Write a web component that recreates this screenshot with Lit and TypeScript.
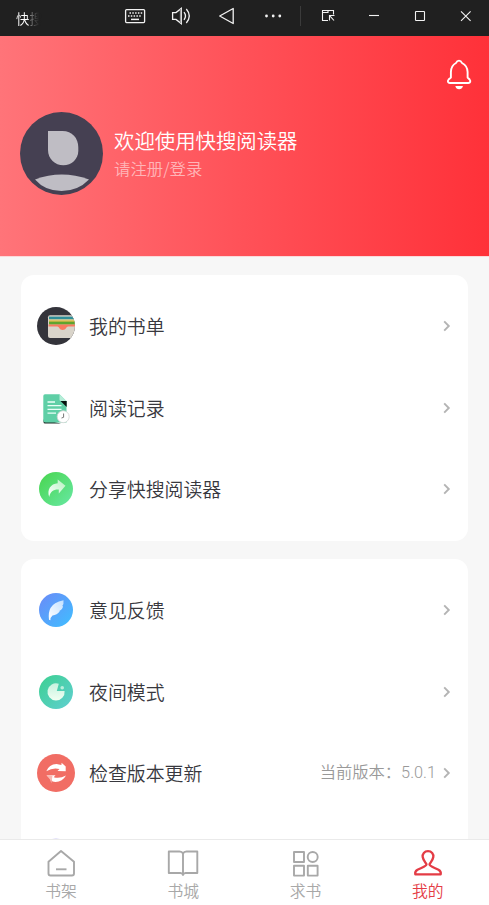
import { LitElement, html, svg, css } from "lit";
import { customElement, property } from "lit/decorators.js";

const cjk = css`"Noto Sans CJK SC", "Noto Sans", sans-serif`;
const demi = css`"Noto Sans CJK SC DemiLight", "Noto Sans CJK SC", "Noto Sans", sans-serif`;

const chevron = html`<svg width="8" height="12" viewBox="0 0 8 12" fill="none" stroke="#b4b4b4" stroke-width="1.900"><path d="M1.200 1.400 5.800 6 1.200 10.600"/></svg>`;

const icons: Record<string, unknown> = {
  list: svg`
    <defs><clipPath id="c"><circle cx="19" cy="19" r="19"/></clipPath></defs>
    <circle cx="19" cy="19" r="19" fill="#34343b"/>
    <g clip-path="url(#c)">
      <rect x="11" y="8.300" width="30" height="22.800" rx="2" fill="#d9d4ca"/>
      <rect x="12" y="9.600" width="28" height="3" fill="#2e8e98"/>
      <rect x="12" y="12.400" width="28" height="1.200" fill="#e5d28c"/>
      <rect x="12" y="13.400" width="28" height="1.500" fill="#dcb83c"/>
      <rect x="12" y="14.700" width="28" height="2.900" fill="#5fa52e"/>
      <path d="M11.500 17.400H40V19.400H31c-1.600 0-2 3.500-5.300 3.500S22 19.400 20.400 19.400H11.500z" fill="#fa7a60"/>
    </g>`,
  record: svg`
    <path d="M6.500 30.500V33q0 1.500 1.500 1.500h16z" fill="#1c2b26"/>
    <path d="M8 5.300H22.500L29.500 12.300V33.500H8.500Q6.300 33.500 6.300 31.300V7Q6.300 5.300 8 5.300z" fill="#5fcfa6"/>
    <path d="M22.500 5.300V10.500Q22.500 12 24 12H29.500z" fill="#b5edd8"/>
    <path d="M23.500 12H29.700V18z" fill="#06110d"/>
    <path d="M10.500 13H18M10.500 16.700H24.500M10.500 20.400H24.500M10.500 24.200H19" stroke="#eafff7" stroke-width="1.300" fill="none"/>
    <circle cx="26.200" cy="27.700" r="6" fill="#fff" stroke="#cfd3d2" stroke-width=".8"/>
    <path d="M26.600 24.500V28.300L24.500 29" stroke="#777" stroke-width="1" fill="none"/>`,
  share: svg`
    <defs><linearGradient id="g" x1="0" y1="0" x2="1" y2="1"><stop offset=".1" stop-color="#4bd756"/><stop offset="1" stop-color="#68e8a4"/></linearGradient>
    <linearGradient id="a" x1="0" y1="1" x2="1" y2="0"><stop stop-color="#fff"/><stop offset="1" stop-color="#b5f2c0"/></linearGradient></defs>
    <circle cx="19" cy="19" r="17" fill="url(#g)"/>
    <path d="M20.700 9.500 28.500 15.800 21.800 23.400V19.600C16.500 19.300 13.500 21.500 12.200 26.900 9.800 19.800 13.500 13.800 20.700 13.300z" fill="url(#a)"/>`,
  feedback: svg`
    <defs><linearGradient id="g" x1="0" y1="0" x2="1" y2="1"><stop offset=".1" stop-color="#678ff8"/><stop offset=".9" stop-color="#43baff"/></linearGradient>
    <linearGradient id="a" x1="1" y1="0" x2="0" y2="1"><stop stop-color="#c4e1ff"/><stop offset="1" stop-color="#fff"/></linearGradient></defs>
    <circle cx="19" cy="19" r="17" fill="url(#g)"/>
    <path d="M26.500 9.300Q16.500 11.500 13.500 17 11 21.500 12 28.800L13.400 29.200Q13.400 26.200 15.500 24.500 20 24.200 22.800 20.300L22.300 19.900Q25.700 18.300 26 15.200L25.300 14.900Q27 13 26.500 9.300z" fill="url(#a)"/>`,
  night: svg`
    <defs><linearGradient id="g" x1="0" y1="0" x2="1" y2="1"><stop offset=".1" stop-color="#40d097"/><stop offset=".9" stop-color="#5dcfcb"/></linearGradient>
    <linearGradient id="a" x1="0" y1="0" x2="0" y2="1"><stop stop-color="#c7f2df"/><stop offset="1" stop-color="#f1fff2"/></linearGradient></defs>
    <circle cx="19" cy="19" r="17" fill="url(#g)"/>
    <path d="M21.800 10.700A8.600 8.600 0 1 0 27.600 17.900L19.800 18z" fill="url(#a)"/>
    <circle cx="25.200" cy="14.800" r="1.800" fill="#bcefdc"/>`,
  update: svg`
    <circle cx="19" cy="19" r="19" fill="#f16d64"/>
    <path d="M9.300 17.200Q12 10.400 19.500 10L24.400 10.900 24.600 8.700 28.700 12.500V17.300L20.500 16.900 22.500 15Q16 13.200 9.300 17.200z" fill="#fff"/>
    <path d="M29 21.600Q25.500 27.900 18.500 27.900L15.500 27.400 14 24.500 9.500 21.500 18.500 21.300 16.700 23.200Q22.500 25 29 21.600z" fill="#fff"/>
    <path d="M9.500 21.300 15.500 22 14.300 29.200 13 25.500z" fill="#f9bab4"/>`,
  more: svg`<circle cx="19" cy="19" r="16.500" fill="#c9c5f3"/>`,
};

@customElement("menu-row")
class MenuRow extends LitElement {
  @property() icon = "";
  @property() label = "";
  @property() note = "";
  static styles = css`
    :host { display: flex; align-items: center; height: 81.5px; padding: 0 17px 0 16px; font-family: ${demi}; }
    svg { display: block; }
    .icon { width: 38px; height: 38px; flex: none; }
    .label { flex: 1; margin-left: 14px; font-size: 18.9px; line-height: 28px; font-weight: 350; color: #38383e; white-space: nowrap; }
    .note { font-family: Roboto, ${demi}; font-weight: 350; font-size: 16.3px; line-height: 24px; color: #999; margin-right: 7px; white-space: nowrap; }
  `;
  render() {
    return html`<svg class="icon" viewBox="0 0 38 38">${icons[this.icon]}</svg>
      <span class="label">${this.label}</span>
      ${this.note ? html`<span class="note">${this.note}</span>` : ""}${chevron}`;
  }
}

@customElement("app-root")
class AppRoot extends LitElement {
  static styles = css`
    :host { display: flex; flex-direction: column; height: 905px; width: 489px; overflow: hidden; background: #f7f7f7; font-family: ${demi}; font-weight: 350; }
    svg { display: block; }
    .bar { display: flex; height: 36px; flex: none; background: #202020; }
    .name { width: 34px; margin: 8px 0 0 16px; font-family: ${cjk}; font-size: 13.5px; line-height: 20px; font-weight: 400; white-space: nowrap; color: transparent; background: linear-gradient(90deg, #fff 11px, #888 14px, #202020 23px); background-clip: text; -webkit-background-clip: text; }
    .tools { margin-left: 70px; }
    .hero { height: 220px; flex: none; display: flex; justify-content: space-between; box-sizing: border-box; padding: 0 17px 0 20px; background: linear-gradient(90deg, #ff7479, #ff5158 50%, #ff3139); box-shadow: 0 1px 0 #fbd9da; }
    .user { display: flex; align-items: center; gap: 11px; height: 220px; margin-top: 7px; }
    .who { display: flex; flex-direction: column; }
    .title { color: #fff; font-size: 20.4px; line-height: 30px; }
    .sub { color: #ffb5b8; font-size: 16.4px; line-height: 26px; }
    .bell { margin-top: 22px; }
    .content { flex: 1; min-height: 0; overflow: hidden; display: flex; flex-direction: column; gap: 18px; padding: 19px 21px 0; }
    .card { flex: none; background: #fff; border-radius: 13px; padding: 10.25px 0 11.25px; }
    nav { flex: none; height: 66px; box-sizing: border-box; border-top: 1px solid #eaeaea; background: #fff; display: grid; grid-template-columns: repeat(4, 1fr); }
    .tab { display: flex; flex-direction: column; align-items: center; padding-top: 8px; color: #a8a8a8; font-size: 15.8px; line-height: 22px; }
    .tab svg { margin-bottom: 2px; }
    .on { color: #e43c45; }
  `;
  render() {
    return html`
      <div class="bar">
        <div class="name">快搜</div>
        <svg class="tools" width="369" height="36" viewBox="120 0 369 36" fill="none" stroke="#f2f2f2" stroke-width="1.300">
          <rect x="125.600" y="9.600" width="19" height="13" rx="1"/>
          <path d="M129.500 12.900h13M128 16.100h13" stroke-width="1.500" stroke-dasharray="1.500 1.300"/>
          <path d="M131 19.400h8" stroke-width="1.500"/>
          <path d="M172.600 12.600h3.400L181.300 8.400V23.600L176 19.400h-3.400z"/>
          <path d="M180.500 9v14" stroke="#999"/>
          <path d="M184 12.200q3 3.800 0 7.600M186.300 9q6 7 0 14"/>
          <path d="M219.700 16 233.200 8.500V23.500z" stroke-linejoin="round"/>
          <g fill="#f2f2f2" stroke="none"><circle cx="266.500" cy="16" r="1.400"/><circle cx="273.200" cy="16" r="1.400"/><circle cx="279.800" cy="16" r="1.400"/></g>
          <path d="M300.500 6v20" stroke="#3b3b3b" stroke-width="1"/>
          <path d="M328 20.500h-5.500V10.500h11V14.500M322.500 12.500h5.500v-2M329.500 20.500v-5h5M329.800 15.800l4.200 4.700" stroke-width="1.100"/>
          <path d="M369 15.500h10" stroke-width="1.100"/>
          <rect x="415.500" y="11.500" width="9" height="9" rx=".6" stroke-width="1.100"/>
          <path d="M461 11.300l9.600 9.600M470.600 11.300l-9.600 9.600" stroke-width="1.100"/>
        </svg>
      </div>
      <header class="hero">
        <div class="user">
          <svg width="83" height="83" viewBox="0 0 83 83">
            <circle cx="41.500" cy="41.500" r="41.500" fill="#454052"/>
            <path d="M28 19H42.500C52 19 58.300 26 58.300 35.500V39C58.300 47 51.500 53.300 43.300 53.300S28 47 28 38z" fill="#bfbdc4"/>
            <path d="M15 67.500Q41.500 57.500 69 67.500Q58 79 41.500 79T15 67.500z" fill="#bfbdc4"/>
          </svg>
          <div class="who"><div class="title">欢迎使用快搜阅读器</div><div class="sub">请注册/登录</div></div>
        </div>
        <svg class="bell" width="26" height="34" viewBox="446 58 26 34" fill="none" stroke="#fff" stroke-width="1.900" stroke-linejoin="round">
          <path d="M459 60.600C457.200 60.600 456.500 61.800 456 63 452.500 64.800 451 68 450.900 72V77.500L448.600 79.500C447.200 81.200 448 83 449.800 83H468.400C470.200 83 471 81.200 469.600 79.500L467.600 77.500V72C467.500 68 465.500 64.800 462 63 461.500 61.800 460.800 60.600 459 60.600z"/>
          <path d="M455.300 86H463Q462 89.200 459.100 89.200T455.300 86z" fill="#fff" stroke="none"/>
        </svg>
      </header>
      <main class="content">
        <section class="card">
          <menu-row icon="list" label="我的书单"></menu-row>
          <menu-row icon="record" label="阅读记录"></menu-row>
          <menu-row icon="share" label="分享快搜阅读器"></menu-row>
        </section>
        <section class="card">
          <menu-row icon="feedback" label="意见反馈"></menu-row>
          <menu-row icon="night" label="夜间模式"></menu-row>
          <menu-row icon="update" label="检查版本更新" note="当前版本：5.0.1"></menu-row>
          <menu-row icon="more"></menu-row>
        </section>
      </main>
      <nav>
        <div class="tab"><svg width="30" height="30" viewBox="46 848 30 30" fill="none" stroke="currentColor" stroke-width="1.900" stroke-linejoin="round"><path d="M61 851 74 861.800V873.500Q74 875.500 72 875.500H50.500Q48.500 875.500 48.500 873.500V861.800z"/><path d="M56 869.300H66.500"/></svg>书架</div>
        <div class="tab"><svg width="32" height="30" viewBox="167 848 32 30" fill="none" stroke="currentColor" stroke-width="1.900" stroke-linejoin="round"><path d="M183 853.500Q182 851.500 179.500 851.500H168.800V873H180.500Q182.300 873 183 875 183.700 873 185.500 873H197.300V851.500H186.500Q184 851.500 183 853.500V874.500"/></svg>书城</div>
        <div class="tab"><svg width="30" height="30" viewBox="291 848 30 30" fill="none" stroke="currentColor" stroke-width="1.900" stroke-linejoin="round"><rect x="294" y="852" width="10" height="10"/><circle cx="312.700" cy="857" r="5"/><rect x="294" y="865.800" width="10" height="9.800"/><rect x="307.800" y="865.800" width="9.800" height="9.800"/></svg>求书</div>
        <div class="tab on"><svg width="30" height="30" viewBox="413.500 848 30 30" fill="none" stroke="currentColor" stroke-width="2.300" stroke-linejoin="round"><path d="M428.500 851.200C424.800 851.200 422.800 854 423.200 857 423.600 860 426 862.500 427 864.300 427 866.500 422.500 867.500 418 869.800 416 870.900 415.400 872.500 415.800 874.300H441.200C441.600 872.500 441 870.900 439 869.800 434.500 867.500 430 866.500 430 864.300 431 862.500 433.400 860 433.800 857 434.200 854 432.200 851.200 428.500 851.200z"/></svg>我的</div>
      </nav>
    `;
  }
}
